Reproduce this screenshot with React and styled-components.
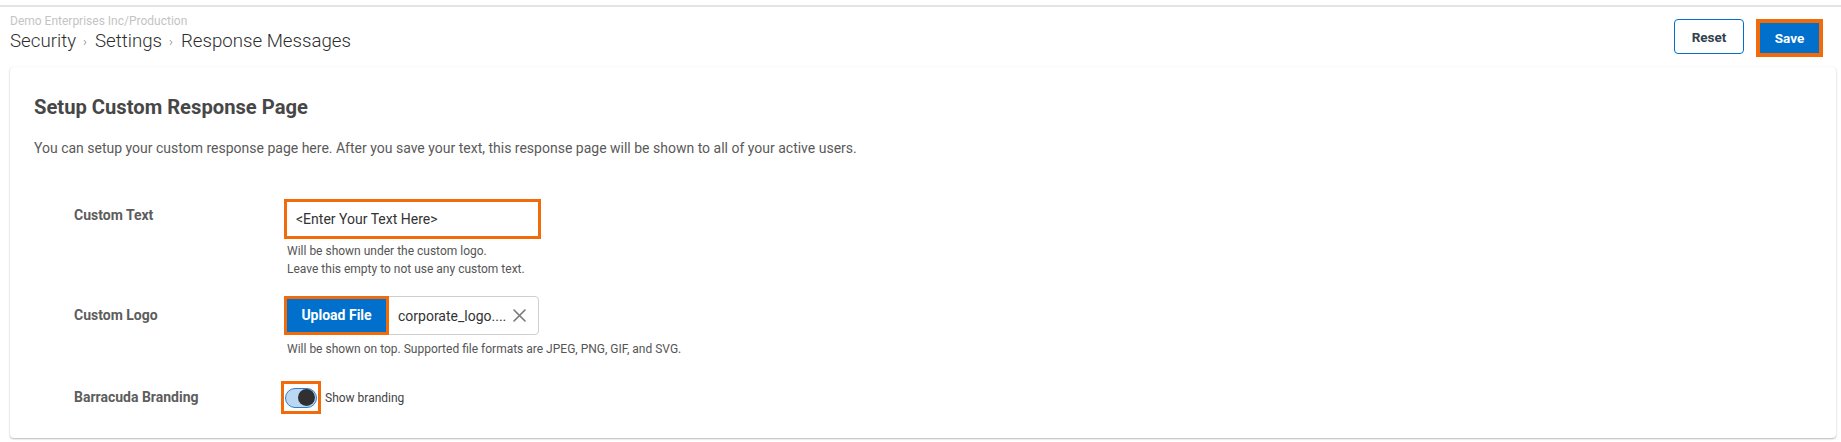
import React, { useState } from 'react';
import styled, { createGlobalStyle } from 'styled-components';

const ORANGE = '#f26b0a';
const BLUE = '#0070cc';

const GlobalStyle = createGlobalStyle`
	html, body {
		margin: 0;
		padding: 0;
		background: #ffffff;
		font-family: Roboto, "Liberation Sans", Arial, sans-serif;
		color: #333;
	}
`;

const Page = styled.div`
	padding-top: 5px;
	width: 1841px;
	height: 442px;
	box-sizing: border-box;
	overflow: hidden;
`;

const Header = styled.div`
	border-top: 2px solid #e4e4e4;
	display: flex;
	justify-content: space-between;
	align-items: flex-start;
	padding: 0 18px 0 10px;
	height: 60px;
`;

const Crumbs = styled.div`
	display: flex;
	flex-direction: column;
	padding-top: 7px;
`;

const Account = styled.div`
	font-size: 12px;
	line-height: 14px;
	color: #c4c4c4;
`;

const Trail = styled.div`
	display: flex;
	align-items: center;
	font-size: 18.7px;
	font-weight: 300;
	line-height: 22px;
	color: #2e2e2e;
	margin-top: 1px;
`;

const Sep = styled.span`
	font-size: 13px;
	color: #777;
	margin: 0 8px 0 7px;
	padding-top: 2px;
`;

const Actions = styled.div`
	display: flex;
	align-items: flex-start;
	gap: 12px;
	padding-top: 12px;
`;

const Button = styled.button`
	font-family: Roboto, "Liberation Sans", Arial, sans-serif;
	font-size: 13.5px;
	font-weight: 700;
	cursor: pointer;
	box-sizing: border-box;
	height: ${p => (p.highlight ? '38px' : '35px')};
	padding: 0;
	width: ${p => p.width}px;
	color: ${p => (p.primary ? '#fff' : '#33404e')};
	background: ${p => (p.primary ? BLUE : '#fff')};
	border: ${p => (p.highlight ? `4px solid ${ORANGE}` : `1px solid ${BLUE}`)};
	border-radius: ${p => (p.highlight ? '0' : '4px')};
`;

const Card = styled.div`
	margin: 0 5px 0 10px;
	height: 371px;
	box-sizing: border-box;
	background: #fff;
	border-radius: 4px;
	box-shadow: 0 1px 2px rgba(0, 0, 0, 0.28), 0 0 1px rgba(0, 0, 0, 0.08);
	padding: 28px 24px 0 24px;
`;

const Title = styled.h2`
	margin: 0;
	font-size: 20.2px;
	font-weight: 700;
	line-height: 24px;
	color: #474747;
`;

const Intro = styled.p`
	margin: 21px 0 0;
	font-size: 14px;
	line-height: 16px;
	color: #5a5a5a;
`;

const Form = styled.div`
	display: grid;
	grid-template-columns: 210px 1fr;
	padding-left: 40px;
	margin-top: 43px;
`;

const Label = styled.div`
	font-size: 14px;
	font-weight: 700;
	line-height: 16px;
	color: #5d5d5d;
	padding-top: ${p => p.top}px;
	margin-top: ${p => p.gap || 0}px;
`;

const Field = styled.div`
	display: flex;
	flex-direction: column;
	margin-top: ${p => p.gap || 0}px;
`;

const TextBox = styled.input`
	width: 257px;
	height: 40px;
	box-sizing: border-box;
	border: 3px solid ${ORANGE};
	padding: 0 0 0 9px;
	font-family: Roboto, "Liberation Sans", Arial, sans-serif;
	font-size: 14px;
	color: #333;
	outline: none;
	background: #fff;
`;

const Help = styled.div`
	font-size: 12px;
	line-height: 18px;
	color: #555;
	padding-left: 3px;
	margin-top: ${p => p.gap || 0}px;
`;

const FileField = styled.div`
	display: flex;
	align-items: center;
	width: 255px;
	height: 39px;
	box-sizing: border-box;
	border: 1px solid #cfcfcf;
	border-radius: 4px;
`;

const UploadButton = styled.button`
	height: 39px;
	width: 105px;
	margin: -1px 0 0 -1px;
	box-sizing: border-box;
	background: ${BLUE};
	color: #fff;
	border: 3px solid ${ORANGE};
	font-family: Roboto, "Liberation Sans", Arial, sans-serif;
	font-size: 14px;
	font-weight: 700;
	padding: 0;
`;

const FileName = styled.span`
	font-size: 14px;
	color: #333;
	margin-left: 9px;
	flex: 1;
`;

const Clear = styled.span`
	display: flex;
	align-items: center;
	margin-right: 12px;
`;

const ToggleRow = styled.div`
	display: flex;
	align-items: center;
`;

const ToggleFrame = styled.div`
	width: 40px;
	height: 33px;
	box-sizing: border-box;
	border: 3px solid ${ORANGE};
	display: flex;
	align-items: center;
	justify-content: center;
	margin-left: -3px;
`;

const Track = styled.div`
	width: 32px;
	height: 20px;
	box-sizing: border-box;
	border-radius: 10px;
	border: 1px solid #2f7fd0;
	background: #bcd7f1;
	display: flex;
	align-items: center;
	justify-content: ${p => (p.on ? 'flex-end' : 'flex-start')};
	padding: 0 1px;
`;

const Thumb = styled.div`
	width: 17px;
	height: 17px;
	border-radius: 50%;
	background: #303030;
`;

const ToggleText = styled.span`
	font-size: 12px;
	color: #444;
	margin-left: 4px;
`;

export default function App() {
	const [text, setText] = useState('<Enter Your Text Here>');
	const [branding, setBranding] = useState(true);

	return (
		<Page>
			<GlobalStyle />
			<Header>
				<Crumbs>
					<Account>Demo Enterprises Inc/Production</Account>
					<Trail>
						Security<Sep>›</Sep>Settings<Sep>›</Sep>Response Messages
					</Trail>
				</Crumbs>
				<Actions>
					<Button width={70}>Reset</Button>
					<Button primary highlight width={67}>
						Save
					</Button>
				</Actions>
			</Header>

			<Card>
				<Title>Setup Custom Response Page</Title>
				<Intro>
					You can setup your custom response page here. After you save your text, this
					response page will be shown to all of your active users.
				</Intro>

				<Form>
					<Label top={8}>Custom Text</Label>
					<Field>
						<TextBox value={text} onChange={e => setText(e.target.value)} />
						<Help gap={3}>
							Will be shown under the custom logo.
							<br />
							Leave this empty to not use any custom text.
						</Help>
					</Field>

					<Label top={11} gap={18}>
						Custom Logo
					</Label>
					<Field gap={18}>
						<FileField>
							<UploadButton>Upload File</UploadButton>
							<FileName>corporate_logo....</FileName>
							<Clear>
								<svg width="13" height="13" viewBox="0 0 13 13">
									<path
										d="M1 1 L12 12 M12 1 L1 12"
										stroke="#777"
										strokeWidth="1.6"
										strokeLinecap="round"
									/>
								</svg>
							</Clear>
						</FileField>
						<Help gap={5}>
							Will be shown on top. Supported file formats are JPEG, PNG, GIF, and SVG.
						</Help>
					</Field>

					<Label top={8} gap={23}>
						Barracuda Branding
					</Label>
					<Field gap={23}>
						<ToggleRow>
							<ToggleFrame onClick={() => setBranding(b => !b)}>
								<Track on={branding}>
									<Thumb />
								</Track>
							</ToggleFrame>
							<ToggleText>Show branding</ToggleText>
						</ToggleRow>
					</Field>
				</Form>
			</Card>
		</Page>
	);
}
